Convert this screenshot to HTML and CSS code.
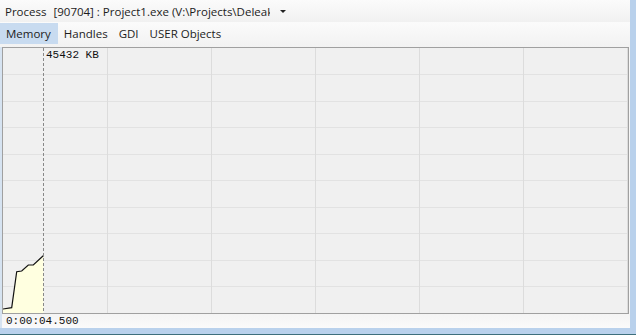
FILE: index.html
```html
<!DOCTYPE html>
<html lang="en">
<head>
    <meta charset="UTF-8">
    <title>Process monitor</title>
    <link rel="stylesheet" href="styles.css">
</head>
<body>
    <div class="window">
        <div class="main">
            <!-- process selector -->
            <div class="toolbar">
                <span class="label">Process</span>
                <div class="combo">
                    <span class="combo-text">[90704] : Project1.exe (V:\Projects\Deleaker\Test\Project1.exe)</span>
                    <span class="arrow"></span>
                </div>
            </div>

            <!-- counters -->
            <div class="tabs">
                <span class="tab active">Memory</span>
                <span class="tab">Handles</span>
                <span class="tab">GDI</span>
                <span class="tab">USER Objects</span>
            </div>

            <div class="graph-area">
                <div class="chart">
                    <svg class="grid" width="625" height="265" viewBox="0 0 625 265">
                        <g stroke="#e2e2e2" stroke-width="1">
                            <line x1="0" y1="26.5" x2="625" y2="26.5"/>
                            <line x1="0" y1="53.5" x2="625" y2="53.5"/>
                            <line x1="0" y1="79.5" x2="625" y2="79.5"/>
                            <line x1="0" y1="106.5" x2="625" y2="106.5"/>
                            <line x1="0" y1="132.5" x2="625" y2="132.5"/>
                            <line x1="0" y1="159.5" x2="625" y2="159.5"/>
                            <line x1="0" y1="185.5" x2="625" y2="185.5"/>
                            <line x1="0" y1="212.5" x2="625" y2="212.5"/>
                            <line x1="0" y1="238.5" x2="625" y2="238.5"/>
                        </g>
                        <g stroke="#dcdcdc" stroke-width="1">
                            <line x1="104.5" y1="0" x2="104.5" y2="265"/>
                            <line x1="208.5" y1="0" x2="208.5" y2="265"/>
                            <line x1="312.5" y1="0" x2="312.5" y2="265"/>
                            <line x1="416.5" y1="0" x2="416.5" y2="265"/>
                            <line x1="520.5" y1="0" x2="520.5" y2="265"/>
                            <line x1="624.5" y1="0" x2="624.5" y2="265"/>
                        </g>
                        <!-- memory usage -->
                        <polygon points="0,261 8.7,259.7 13.7,223.7 18.7,223 25.3,217 30.3,217 40.5,207.5 40.5,265 0,265" fill="#ffffe0"/>
                        <polyline points="0,261 8.7,259.7 13.7,223.7 18.7,223 25.3,217 30.3,217 40.5,207.5" fill="none" stroke="#111" stroke-width="1.2"/>
                        <line x1="40.5" y1="0" x2="40.5" y2="265" stroke="#888" stroke-width="1" stroke-dasharray="3,2"/>
                    </svg>
                    <span class="value">45432 KB</span>
                </div>
                <div class="status">0:00:04.500</div>
            </div>
        </div>
    </div>
</body>
</html>
```

FILE: styles.css
```css
body {
    margin: 0;
    background-color: #b9d1ec;
    font-family: "Open Sans", "Noto Sans", sans-serif;
    font-size: 11.5px;
    color: #1c1c1c;
}

.window {
    width: 636px;
    height: 335px;
    box-sizing: border-box;
    padding-right: 6px;
    padding-bottom: 6px;
    border-bottom: 1px solid #3d6f7c;
    display: flex;
}

.main {
    width: 630px;
    display: flex;
    flex-direction: column;
    background-color: #f6f6f6;
}

.toolbar {
    height: 22px;
    display: flex;
    align-items: center;
    padding-left: 5px;
    background: linear-gradient(#fbfbfb, #f1f1f1);
}

.combo {
    display: flex;
    align-items: center;
    margin-left: 7px;
}

.combo-text {
    width: 217px;
    overflow: hidden;
    white-space: nowrap;
}

.arrow {
    width: 0;
    height: 0;
    margin-left: 10px;
    margin-top: 1px;
    border-left: 3px solid transparent;
    border-right: 3px solid transparent;
    border-top: 3px solid #222;
}

.tabs {
    height: 25px;
    box-sizing: border-box;
    padding-top: 1px;
    display: flex;
    align-items: flex-start;
    background: linear-gradient(#fbfbfb, #f2f2f2);
}

.tab {
    height: 21px;
    line-height: 21px;
    padding: 0 5px 0 6px;
}

.tab.active {
    padding-right: 7px;
    background-color: #c8dbf0;
}

.graph-area {
    flex: 1;
    display: flex;
    flex-direction: column;
    border-left: 2px solid #d6e3f1;
}

.chart {
    position: relative;
    width: 625px;
    height: 265px;
    border: 1px solid #a0a0a0;
    background-color: #f0f0f0;
}

.grid {
    display: block;
}

.value {
    position: absolute;
    left: 43px;
    top: 0;
    font-family: "Liberation Mono", monospace;
    font-size: 11px;
    line-height: 14px;
    color: #111;
}

.status {
    height: 14px;
    line-height: 14px;
    padding-left: 4px;
    font-family: "Liberation Mono", monospace;
    font-size: 11px;
    color: #111;
    background: linear-gradient(#f4f4f4, #fafafa);
}
```
